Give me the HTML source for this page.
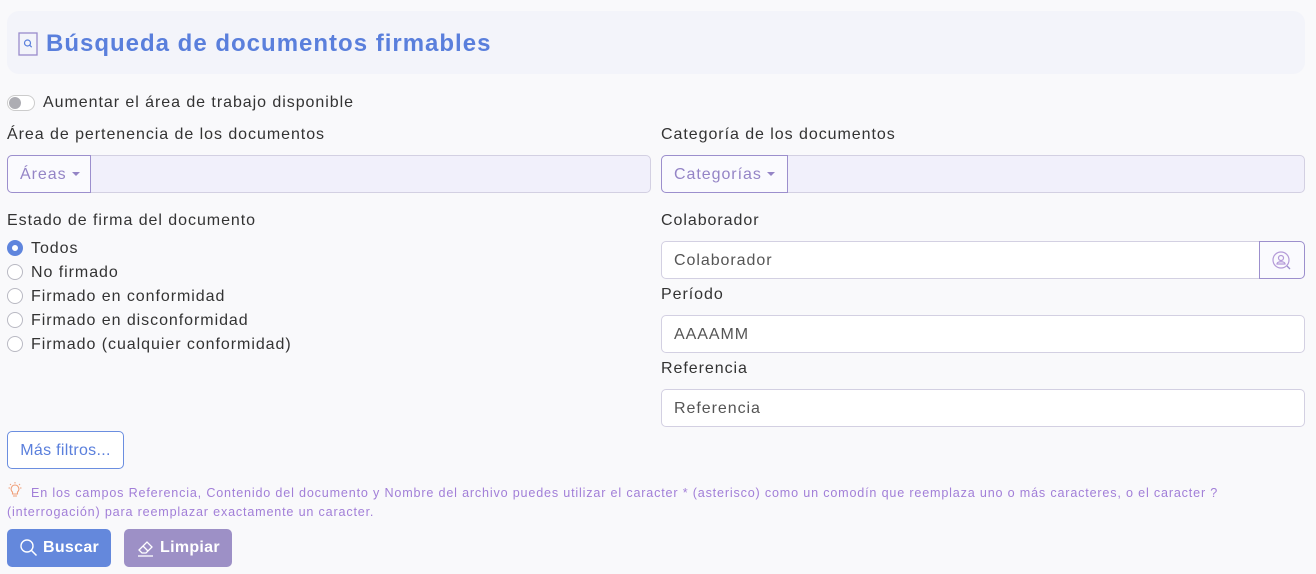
<!DOCTYPE html>
<html><head><meta charset="utf-8"><style>
*{box-sizing:border-box;margin:0;padding:0}
body{width:1316px;height:574px;background:#f9f9fb;font-family:"Liberation Sans",sans-serif;color:#3a3a3a;position:relative;overflow:hidden;font-size:16px;letter-spacing:0.95px}
.a{position:absolute;white-space:nowrap}
.hdr{left:7px;top:11px;width:1298px;height:63px;background:#f3f4fa;border-radius:12px}
.title{left:46px;top:30px;font-size:24px;font-weight:bold;color:#5a7fdc;letter-spacing:1px}
.lbl{font-size:16px;color:#333;line-height:20px}
.grp{height:38px;border:1px solid #d3d0e2;border-radius:5px;background:#f1f0fb}
.dd{position:absolute;left:-1px;top:-1px;height:38px;border:1px solid #9c8fcd;border-radius:5px 0 0 5px;background:#fafafe;color:#9484c6;font-size:16px;line-height:38px;padding:0 12px}
.dd:after{content:"";display:inline-block;margin-left:5px;vertical-align:3px;border-left:4px solid transparent;border-right:4px solid transparent;border-top:4px solid #9484c6}
.inp{height:38px;border:1px solid #d3d0e2;border-radius:5px;background:#fff;font-size:16px;color:#555;line-height:38px;padding-left:12px}
.rad{left:7px;width:16px;height:16px;border:1px solid #b9b9c3;border-radius:50%;background:#fff}
.rt{left:31px;font-size:16px;color:#333;line-height:20px}
</style></head><body>
<div class="a hdr"></div>
<svg class="a" style="left:18px;top:32px" width="20" height="24" viewBox="0 0 20 24"><rect x="1" y="1" width="18" height="22" fill="none" stroke="#9a8ccc" stroke-width="1.3"/><circle cx="9.5" cy="11" r="3" fill="none" stroke="#5a7fdc" stroke-width="1.2"/><path d="M11.7 13.2l2 2" stroke="#5a7fdc" stroke-width="1.2"/></svg>
<div class="a title">Búsqueda de documentos firmables</div>

<div class="a" style="left:7px;top:95px;width:28px;height:16px;border:1px solid #ccc;border-radius:8px;background:#fff"><div style="position:absolute;left:1px;top:1px;width:12px;height:12px;border-radius:50%;background:#adadb3"></div></div>
<div class="a lbl" style="left:43px;top:93px">Aumentar el área de trabajo disponible</div>

<div class="a lbl" style="left:7px;top:125px">Área de pertenencia de los documentos</div>
<div class="a grp" style="left:7px;top:155px;width:644px"><div class="dd" style="width:84px">Áreas</div></div>
<div class="a lbl" style="left:661px;top:125px">Categoría de los documentos</div>
<div class="a grp" style="left:661px;top:155px;width:644px"><div class="dd" style="width:127px">Categorías</div></div>

<div class="a lbl" style="left:7px;top:211px">Estado de firma del documento</div>
<div class="a rad" style="top:240px;border:5px solid #5f85dd"></div><div class="a rt" style="top:239px">Todos</div>
<div class="a rad" style="top:264px"></div><div class="a rt" style="top:263px">No firmado</div>
<div class="a rad" style="top:288px"></div><div class="a rt" style="top:287px">Firmado en conformidad</div>
<div class="a rad" style="top:312px"></div><div class="a rt" style="top:311px">Firmado en disconformidad</div>
<div class="a rad" style="top:336px"></div><div class="a rt" style="top:335px">Firmado (cualquier conformidad)</div>

<div class="a lbl" style="left:661px;top:211px">Colaborador</div>
<div class="a inp" style="left:661px;top:241px;width:599px;border-radius:5px 0 0 5px">Colaborador</div>
<div class="a" style="left:1259px;top:241px;width:46px;height:38px;border:1px solid #9c8fcd;border-radius:0 5px 5px 0;background:#fafafe"></div>
<svg class="a" style="left:1271px;top:250px" width="22" height="22" viewBox="0 0 22 22"><circle cx="10" cy="10" r="8" fill="none" stroke="#b49ad8" stroke-width="1.2"/><circle cx="10" cy="8" r="2.5" fill="none" stroke="#b49ad8" stroke-width="1.2"/><path d="M6 14c0-3 8-3 8 0z" fill="none" stroke="#b49ad8" stroke-width="1.2"/><path d="M16 16l3 3" stroke="#9c8fcd" stroke-width="1.3"/></svg>
<div class="a lbl" style="left:661px;top:285px">Período</div>
<div class="a inp" style="left:661px;top:315px;width:644px">AAAAMM</div>
<div class="a lbl" style="left:661px;top:359px">Referencia</div>
<div class="a inp" style="left:661px;top:389px;width:644px">Referencia</div>

<div class="a" style="left:7px;top:431px;width:117px;height:38px;border:1px solid #6b8ee0;border-radius:5px;background:#fff;color:#5a7fdc;font-size:16px;line-height:38px;text-align:center;letter-spacing:0.3px">Más filtros...</div>

<svg class="a" style="left:7px;top:482px" width="16" height="16" viewBox="0 0 16 16"><path d="M8 3a4 4 0 0 0-2.5 7v2h5v-2A4 4 0 0 0 8 3z" fill="none" stroke="#f0a07a" stroke-width="1.1"/><path d="M6 14h4M8 0v1.5M1.5 6H3M13 6h1.5M3 2l1 1M13 2l-1 1" stroke="#f0a07a" stroke-width="1"/></svg>
<div class="a" style="left:31px;top:486px;font-size:12.6px;color:#a27fd8;letter-spacing:0.82px">En los campos Referencia, Contenido del documento y Nombre del archivo puedes utilizar el caracter * (asterisco) como un comodín que reemplaza uno o más caracteres, o el caracter ?</div>
<div class="a" style="left:7px;top:505px;font-size:12.6px;color:#a27fd8;letter-spacing:0.82px">(interrogación) para reemplazar exactamente un caracter.</div>

<div class="a" style="left:7px;top:529px;width:104px;height:38px;border-radius:5px;background:#6488dc;color:#fff;font-size:16px;font-weight:bold;line-height:38px;padding-left:36px;letter-spacing:0.3px">Buscar</div>
<svg class="a" style="left:19px;top:538px" width="20" height="20" viewBox="0 0 20 20"><circle cx="8" cy="8" r="6" fill="none" stroke="#fff" stroke-width="1.4"/><path d="M12.5 12.5l5 5" stroke="#fff" stroke-width="1.5"/></svg>
<div class="a" style="left:124px;top:529px;width:108px;height:38px;border-radius:5px;background:#9d90c6;color:#fff;font-size:16px;font-weight:bold;line-height:38px;padding-left:36px;letter-spacing:0.3px">Limpiar</div>
<svg class="a" style="left:136px;top:538px" width="20" height="20" viewBox="0 0 20 20"><path d="M3 12l8-8 5 5-6 6H6z M7 8l5 5" fill="none" stroke="#fff" stroke-width="1.3"/><path d="M2 18h15" stroke="#fff" stroke-width="1.3"/></svg>
</body></html>
